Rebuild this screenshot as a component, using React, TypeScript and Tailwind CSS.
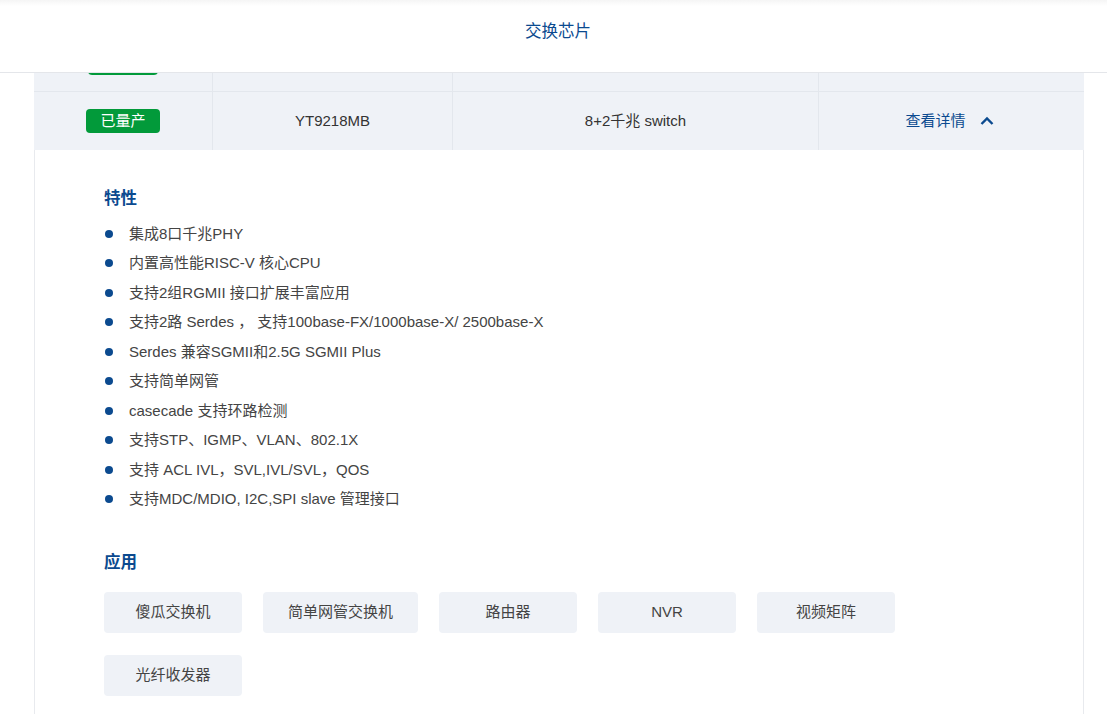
const features = [
  "集成8口千兆PHY",
  "内置高性能RISC-V 核心CPU",
  "支持2组RGMII 接口扩展丰富应用",
  "支持2路 Serdes ， 支持100base-FX/1000base-X/ 2500base-X",
  "Serdes 兼容SGMII和2.5G SGMII Plus",
  "支持简单网管",
  "casecade 支持环路检测",
  "支持STP、IGMP、VLAN、802.1X",
  "支持 ACL IVL，SVL,IVL/SVL，QOS",
  "支持MDC/MDIO, I2C,SPI slave 管理接口",
];

const apps = ["傻瓜交换机", "简单网管交换机", "路由器", "NVR", "视频矩阵", "光纤收发器"];

const App = () => {
  return (
    <div
      className="min-h-screen bg-white text-[15px] text-[#333]"
      style={{ fontFamily: '"Liberation Sans", "Noto Sans CJK SC", sans-serif' }}
    >
      {/* header */}
      <div className="relative h-[73px] border-b border-[#e4e6ea] bg-gradient-to-b from-[#f5f5f5] via-white to-white bg-[length:100%_12px] bg-no-repeat">
        <div className="flex h-[63px] items-center justify-center pl-[9px] text-[16.5px] text-[#0b4a8f]">
          交换芯片
        </div>
      </div>

      <div className="mx-[34px] w-[1050px]">
        {/* previous row, mostly hidden under header */}
        <div className="h-[19px] overflow-hidden border-b border-[#e3e7ed] bg-[#eff2f7]">
          <div className="flex h-[19px]">
            <div className="flex w-[179px] justify-center border-r border-[#e3e7ed]">
              <div className="-mt-[22.5px] h-[24px] w-[70px] rounded-[4px] bg-[#029a3a]" />
            </div>
            <div className="w-[240px] border-r border-[#e3e7ed]" />
            <div className="w-[366px] border-r border-[#e3e7ed]" />
            <div className="flex-1" />
          </div>
        </div>

        {/* current row */}
        <div className="flex h-[58px] bg-[#eff2f7] leading-[20px]">
          <div className="flex w-[179px] items-center justify-center border-r border-[#e3e7ed]">
            <span className="inline-flex h-[24px] w-[74px] items-center justify-center rounded-[4px] bg-[#029a3a] text-white">
              已量产
            </span>
          </div>
          <div className="flex w-[240px] items-center justify-center border-r border-[#e3e7ed]">
            YT9218MB
          </div>
          <div className="flex w-[366px] items-center justify-center border-r border-[#e3e7ed]">
            8+2千兆 switch
          </div>
          <div className="flex flex-1 items-center justify-center gap-[14px] pr-[4px] text-[#0b4a8f]">
            <span>查看详情</span>
            <svg width="14" height="10" viewBox="0 0 14 10" fill="none">
              <path d="M1.5 8 L7 2.5 L12.5 8" stroke="#0b4a8f" strokeWidth="2.4" />
            </svg>
          </div>
        </div>

        {/* expanded detail */}
        <div className="border-x border-[#e8eaee] pb-[18px] pl-[69px] pt-[37px]">
          <h3 className="text-[16.5px] font-bold leading-[22px] text-[#0b4a8f]">特性</h3>
          <ul className="mt-[10px]">
            {features.map((f) => (
              <li key={f} className="flex h-[29.5px] items-center">
                <span className="ml-[1px] h-[8px] w-[8px] rounded-full bg-[#0b4a8f]" />
                <span className="ml-[16px] leading-[20px] text-[#444]">{f}</span>
              </li>
            ))}
          </ul>

          <h3 className="mt-[37px] text-[16.5px] font-bold leading-[22px] text-[#0b4a8f]">应用</h3>
          <div className="mt-[19px] flex w-[830px] flex-wrap gap-x-[21px] gap-y-[22px]">
            {apps.map((a) => (
              <div
                key={a}
                className="flex h-[41px] min-w-[138px] items-center justify-center rounded-[4px] bg-[#eff2f7] px-[25px] text-[#444]"
              >
                {a}
              </div>
            ))}
          </div>
        </div>
      </div>
    </div>
  );
};

export default App;
